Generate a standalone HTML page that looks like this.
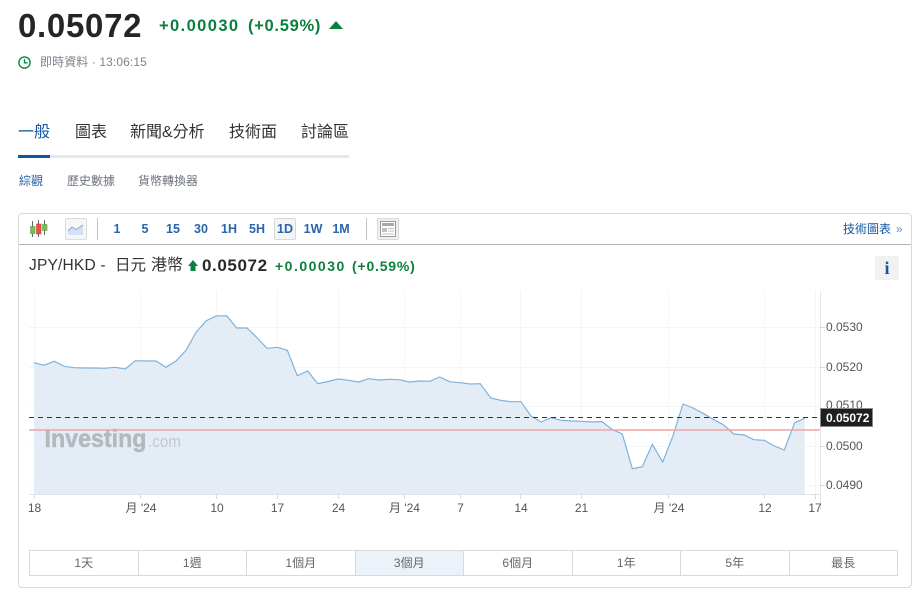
<!DOCTYPE html>
<html lang="zh-Hant"><head><meta charset="utf-8"><title>JPY/HKD</title>
<style>
html,body{margin:0;padding:0;background:#fff}
body{width:923px;height:612px;position:relative;overflow:hidden;font-family:"Liberation Sans","Noto Sans CJK TC",sans-serif;color:#333}
.a{position:absolute;white-space:nowrap}
.iv{color:#2a64ac;font-size:12.5px;font-weight:bold;top:222px;line-height:14px;width:24px;text-align:center}
.tab{top:123px;font-size:16px;line-height:20px;color:#333}
.sub{top:173px;font-size:12px;line-height:16px;color:#70757f}
.rg{left:29px;top:550px;width:869px;height:26px;display:flex;box-sizing:border-box;border:1px solid #d9d9d9;position:absolute}
.rg div{flex:1;border-right:1px solid #d9d9d9;text-align:center;font-size:12px;line-height:25px;color:#666}
.rg div:last-child{border-right:0}
.g1{top:16px;font-size:16.5px;line-height:20px;font-weight:bold;color:#0a7f3f}
.g2{top:257px;font-size:14px;line-height:18px;font-weight:bold;color:#0a7f3f}
</style></head><body>
<div class="a" style="left:18px;top:8px;font-size:33px;line-height:36px;font-weight:bold;color:#232526;letter-spacing:.7px">0.05072</div>
<div class="a g1" style="left:159px;letter-spacing:1.4px">+0.00030</div>
<div class="a g1" style="left:248px;letter-spacing:.7px">(+0.59%)</div>
<svg class="a" style="left:329px;top:21px" width="14" height="9"><path d="M7 0L14 8H0Z" fill="#0a7f3f"/></svg>
<svg class="a" style="left:18px;top:56px" width="13" height="13" fill="none" stroke="#0a8a45" stroke-width="1.400"><circle cx="6.500" cy="6.500" r="5.600"/><path d="M6.500 3v3.800H9.600"/></svg>
<div class="a" style="left:40px;top:54px;font-size:12px;line-height:16px;color:#7d818a;letter-spacing:.1px">即時資料 · 13:06:15</div>

<div class="a tab" style="left:18px;color:#1256a0">一般</div>
<div class="a tab" style="left:75px">圖表</div>
<div class="a tab" style="left:130px">新聞&amp;分析</div>
<div class="a tab" style="left:229px">技術面</div>
<div class="a tab" style="left:301px">討論區</div>
<div class="a" style="left:18px;top:155px;width:331px;height:3px;background:#e4e7ec"></div>
<div class="a" style="left:18px;top:155px;width:32px;height:3px;background:#1256a0"></div>
<div class="a sub" style="left:19px;color:#2a64ac">綜觀</div>
<div class="a sub" style="left:67px">歷史數據</div>
<div class="a sub" style="left:138px">貨幣轉換器</div>

<div class="a" style="left:18px;top:213px;width:894px;height:375px;box-sizing:border-box;border:1px solid #d9d9d9;border-radius:4px"></div>
<div class="a" style="left:19px;top:244px;width:892px;height:1px;background:#b5b5b5"></div>
<svg class="a" style="left:29px;top:220px" width="20" height="18">
<path d="M3.500 1V17M9.500 0V17M15.500 0V15" stroke="#666" stroke-width="1"/>
<rect x="1.500" y="6.500" width="4.500" height="7" fill="#7cbc5a" stroke="#5aa046" stroke-width=".6"/>
<rect x="7.500" y="4" width="4.500" height="10" fill="#e8504c" stroke="#c8423f" stroke-width=".6"/>
<rect x="13.500" y="4.500" width="4.500" height="6" fill="#7cbc5a" stroke="#5aa046" stroke-width=".6"/></svg>
<div class="a" style="left:65px;top:218px;width:22px;height:22px;box-sizing:border-box;border:1px solid #dcdcdc;border-radius:2px;background:#f6f6f6"></div>
<svg class="a" style="left:67px;top:222px" width="18" height="15"><path d="M1 9L5 5L9 7.500L16 3V13H1Z" fill="#d5e1f2"/><path d="M1 9L5 5L9 7.500L16 3" stroke="#8aa8d0" fill="none"/></svg>
<div class="a" style="left:97px;top:218px;width:1px;height:22px;background:#c4c4c4"></div>
<div class="a iv" style="left:105px">1</div>
<div class="a iv" style="left:133px">5</div>
<div class="a iv" style="left:161px">15</div>
<div class="a iv" style="left:189px">30</div>
<div class="a iv" style="left:217px">1H</div>
<div class="a iv" style="left:245px">5H</div>
<div class="a" style="left:274px;top:218px;width:22px;height:22px;box-sizing:border-box;border:1px solid #d9d9d9;border-radius:2px;background:#f5f5f5"></div>
<div class="a iv" style="left:273px">1D</div>
<div class="a iv" style="left:301px">1W</div>
<div class="a iv" style="left:329px">1M</div>
<div class="a" style="left:366px;top:218px;width:1px;height:22px;background:#c4c4c4"></div>
<div class="a" style="left:377px;top:218px;width:22px;height:22px;box-sizing:border-box;border:1px solid #d9d9d9;border-radius:2px;background:#f0f0f0"></div>
<svg class="a" style="left:380px;top:221px" width="16" height="16"><rect x=".5" y=".5" width="15" height="15" fill="#fff" stroke="#9a9a9a"/><rect x="2" y="2" width="12" height="3" fill="#a8a8a8"/><rect x="2" y="7" width="5" height="4" fill="#c0c0c0"/><path d="M8 7.500H14M8 10H14M2 13H14" stroke="#c0c0c0"/></svg>
<div class="a" style="left:843px;top:221px;font-size:12px;line-height:16px;color:#1256a0">技術圖表<span style="color:#5b8fc9;font-size:12px;margin-left:5px">»</span></div>

<div class="a" style="left:29px;top:256px;font-size:15.500px;line-height:20px;color:#333;letter-spacing:.2px">JPY/HKD -</div>
<div class="a" style="left:115px;top:256px;font-size:15.500px;line-height:20px;color:#333">日元</div>
<div class="a" style="left:151px;top:256px;font-size:16px;line-height:20px;color:#333">港幣</div>
<svg class="a" style="left:188px;top:260px" width="10" height="12"><path d="M5 0L10 6H7.500V11H2.500V6H0Z" fill="#0a7f3f"/></svg>
<div class="a" style="left:202px;top:256px;font-size:17px;line-height:20px;font-weight:bold;color:#2a2a2a;letter-spacing:.6px">0.05072</div>
<div class="a g2" style="left:275px;letter-spacing:1.5px">+0.00030</div>
<div class="a g2" style="left:352px;letter-spacing:.8px">(+0.59%)</div>
<div class="a" style="left:875px;top:256px;width:24px;height:24px;background:#f1f1f1;text-align:center;font:bold 18px/24px 'Liberation Serif',serif;color:#1256a0">i</div>

<svg class="a" style="left:0;top:0" width="923" height="612">
<g stroke="#f4f5f7" stroke-width="1" fill="none">
<path d="M29 327.500H820M29 367.500H820M29 406.500H820M29 446.500H820M29 485.500H820"/>
<path d="M34.500 291V494M140.500 291V494M216.500 291V494M277.500 291V494M338.500 291V494M404.500 291V494M460.500 291V494M520.500 291V494M581.500 291V494M668.500 291V494M764.500 291V494M815.500 291V494"/>
</g>
<path d="M34 362.700L44 365.300L54.300 361.300L64.300 366.300L74.300 367.700L84.300 368L94.300 368L104.300 368.300L115 367.300L125.300 369L135.300 360.700L145.700 361L156 361L166 367.300L176 361L186 350.300L196.300 332L206.300 320.700L216.300 316L226.700 315.700L236.700 328L247 328L257 337.700L267 348.300L277.300 347.300L287.300 350.300L297.300 375.700L307.700 371L317.700 383.700L328 381.500L338 379L348.300 380.300L358.700 382L368.700 378.700L379 380L389 379.300L399.300 379.700L409.300 382L419.700 381L429.700 381.300L439.700 377L449.700 381.700L460 382.700L470 384L480.300 383.700L490.700 398L500.700 400.300L510.700 401.700L521 401.700L531 416L541 422L551 417.700L561.300 420.300L571.300 421L581.700 421.300L591.700 422L601.700 421.500L612 429.300L622.300 434L632.300 468.700L642.300 466.700L652.300 444.300L662.700 462L672.700 436.700L683 404L693 408L703 413.300L713.300 419.300L723.700 425L733.700 434L744 435L754 439.700L764.300 440.300L774.300 446L784.300 450L794.700 422.700L804.700 418.300V494.500H34Z" fill="#e4edf5"/>
<path d="M34 362.700L44 365.300L54.300 361.300L64.300 366.300L74.300 367.700L84.300 368L94.300 368L104.300 368.300L115 367.300L125.300 369L135.300 360.700L145.700 361L156 361L166 367.300L176 361L186 350.300L196.300 332L206.300 320.700L216.300 316L226.700 315.700L236.700 328L247 328L257 337.700L267 348.300L277.300 347.300L287.300 350.300L297.300 375.700L307.700 371L317.700 383.700L328 381.500L338 379L348.300 380.300L358.700 382L368.700 378.700L379 380L389 379.300L399.300 379.700L409.300 382L419.700 381L429.700 381.300L439.700 377L449.700 381.700L460 382.700L470 384L480.300 383.700L490.700 398L500.700 400.300L510.700 401.700L521 401.700L531 416L541 422L551 417.700L561.300 420.300L571.300 421L581.700 421.300L591.700 422L601.700 421.500L612 429.300L622.300 434L632.300 468.700L642.300 466.700L652.300 444.300L662.700 462L672.700 436.700L683 404L693 408L703 413.300L713.300 419.300L723.700 425L733.700 434L744 435L754 439.700L764.300 440.300L774.300 446L784.300 450L794.700 422.700L804.700 418.300" fill="none" stroke="#7fb2da" stroke-width="1.200"/>
<text x="44.500" y="447" font-family="Liberation Sans" font-weight="bold" font-size="25" fill="#b4b9bd" stroke="#b4b9bd" stroke-width=".5" textLength="102" lengthAdjust="spacingAndGlyphs">Investing</text>
<text x="148" y="447" font-family="Liberation Sans" font-size="17" fill="#c3c8cc" textLength="33" lengthAdjust="spacingAndGlyphs">.com</text>
<path d="M29 430H820" stroke="#f0a3a3" stroke-width="1.600"/>
<path d="M29 417.500H820" stroke="#333" stroke-width="1" stroke-dasharray="5 4"/>
<path d="M820.500 291V510" stroke="#e2e5ea"/>
<path d="M29 494.500H820" stroke="#e0e3e8"/>
<path d="M34.500 494V499M140.500 494V499M216.500 494V499M277.500 494V499M338.500 494V499M404.500 494V499M460.500 494V499M520.500 494V499M581.500 494V499M668.500 494V499M764.500 494V499M815.500 494V499" stroke="#d8dbe0"/>
<path d="M820 327.500H825M820 367.500H825M820 446.500H825M820 485.500H825" stroke="#d8dbe0"/>
<g font-family="Liberation Sans,Noto Sans CJK TC,sans-serif" font-size="12" fill="#555">
<text x="826" y="331">0.0530</text><text x="826" y="371">0.0520</text><text x="826" y="409">0.0510</text><text x="826" y="450">0.0500</text><text x="826" y="489">0.0490</text>
<g text-anchor="middle">
<text x="34.500" y="512">18</text><text x="141" y="512">月 '24</text><text x="217" y="512">10</text><text x="277.500" y="512">17</text><text x="338.500" y="512">24</text><text x="404.500" y="512">月 '24</text><text x="460.500" y="512">7</text><text x="521" y="512">14</text><text x="581.500" y="512">21</text><text x="669" y="512">月 '24</text><text x="765" y="512">12</text><text x="815" y="512">17</text>
</g></g>
<rect x="820.500" y="408.500" width="52" height="18" fill="#1f1f1f" stroke="#8a8a8a"/>
<text x="826" y="422" font-family="Liberation Sans" font-weight="bold" font-size="12" fill="#fff">0.05072</text>
</svg>

<div class="rg">
<div>1天</div><div>1週</div><div>1個月</div><div style="background:#ebf2f9">3個月</div><div>6個月</div><div>1年</div><div>5年</div><div>最長</div>
</div>
</body></html>
